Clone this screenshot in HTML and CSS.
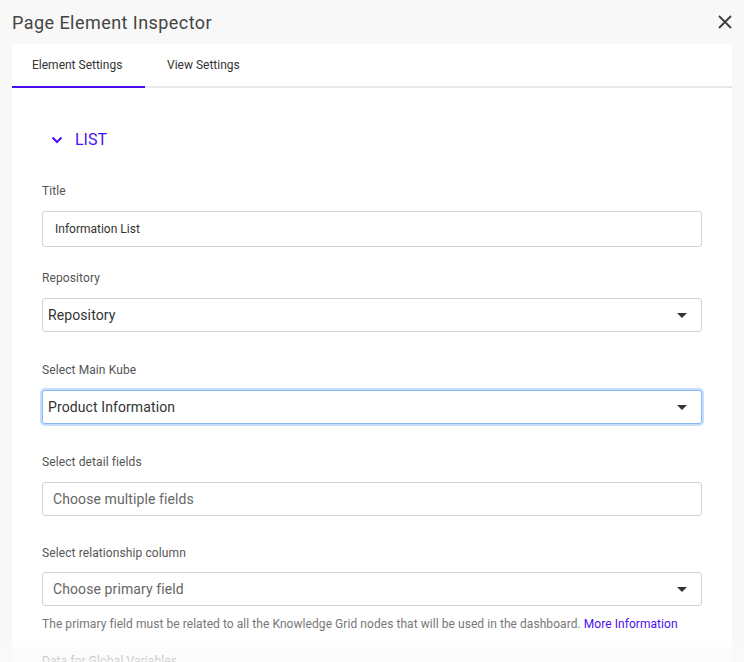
FILE: index.html
```html
<!DOCTYPE html>
<html lang="en">
<head>
<meta charset="utf-8">
<title>Page Element Inspector</title>
<link rel="stylesheet" href="styles.css">
</head>
<body>
<div class="inspector">
  <header class="head">
    <h1 class="head-title">Page Element Inspector</h1>
    <button class="close" aria-label="Close">
      <svg width="14" height="14" viewBox="0 0 14 14"><path d="M1 1L13 13M13 1L1 13" stroke="#3d3d3d" stroke-width="1.8" fill="none"/></svg>
    </button>
  </header>
  <div class="panel">
    <nav class="tabs">
      <div class="tab active">Element Settings</div>
      <div class="tab">View Settings</div>
    </nav>
    <div class="content">
      <div class="section-head">
        <svg class="chev" width="12" height="8" viewBox="0 0 12 8"><path d="M1.5 1.5L6 6L10.5 1.5" stroke="#4a0ff0" stroke-width="2" fill="none"/></svg>
        <span>LIST</span>
      </div>

      <div class="field f-title">
        <label class="label">Title</label>
        <div class="input text">Information List</div>
      </div>

      <div class="field">
        <label class="label">Repository</label>
        <div class="input select value"><span>Repository</span><i class="caret"></i></div>
      </div>

      <div class="field">
        <label class="label">Select Main Kube</label>
        <div class="input select value focus"><span>Product Information</span><i class="caret"></i></div>
      </div>

      <div class="field f-detail">
        <label class="label">Select detail fields</label>
        <div class="input placeholder"><span>Choose multiple fields</span></div>
      </div>

      <div class="field f-rel">
        <label class="label">Select relationship column</label>
        <div class="input select placeholder"><span>Choose primary field</span><i class="caret"></i></div>
        <p class="help">The primary field must be related to all the Knowledge Grid nodes that will be used in the dashboard. <a href="#">More Information</a></p>
      </div>

      <div class="field">
        <label class="label">Data for Global Variables</label>
      </div>
    </div>
  </div>
  <div class="fade"></div>
</div>
</body>
</html>
```
FILE: styles.css
```css
* { box-sizing: border-box; }
html, body { margin: 0; padding: 0; }
body {
  background: #f8f8f8;
  font-family: Roboto, "Liberation Sans", sans-serif;
  color: #333;
  width: 744px;
  height: 662px;
  overflow: hidden;
}
.inspector {
  position: relative;
  height: 662px;
  overflow: hidden;
  padding: 0 12px;
}
.head {
  height: 44px;
  display: flex;
  align-items: center;
  justify-content: space-between;
}
.head-title {
  margin: 0;
  font-size: 18px;
  font-weight: 400;
  color: #444;
  letter-spacing: 0.45px;
}
.close {
  border: 0;
  background: none;
  padding: 0;
  width: 14px;
  height: 14px;
  display: flex;
}
.panel {
  background: #fff;
  min-height: 640px;
}
.tabs {
  display: flex;
  height: 44px;
  border-bottom: 2px solid #e8e8e8;
}
.tab {
  height: 44px;
  display: flex;
  align-items: center;
  padding: 0 20px;
  font-size: 12px;
  color: #333;
  margin-bottom: -2px;
  border-bottom: 2px solid transparent;
}
.tab.active {
  width: 133px;
  border-bottom-color: #4a0ff0;
}
.tab + .tab { padding-left: 22px; }
.content {
  padding: 40px 30px 0;
}
.section-head {
  display: flex;
  align-items: center;
  gap: 12px;
  padding-left: 9px;
  height: 22px;
  color: #4a0ff0;
  font-size: 16px;
  margin-bottom: 33px;
}
.chev { margin-top: 1px; }
.field {
  display: flex;
  flex-direction: column;
  margin-bottom: 30px;
}
.field.f-title { margin-bottom: 23px; }
.field.f-detail { margin-bottom: 29px; }
.field.f-rel { margin-bottom: 21px; }
.f-rel .label { margin-bottom: 11px; }
.label {
  font-size: 12px;
  line-height: 16px;
  color: #555;
  margin-bottom: 12px;
  letter-spacing: 0.1px;
}
.input {
  height: 34px;
  border: 1px solid #cfd3dc;
  border-radius: 3px;
  display: flex;
  align-items: center;
  justify-content: space-between;
  background: #fff;
}
.input.text {
  height: 36px;
  padding-left: 12px;
  font-size: 12px;
  color: #333;
}
.input.value {
  padding: 0 14px 0 5px;
  font-size: 14px;
  color: #333;
  letter-spacing: 0.1px;
}
.input.placeholder {
  padding: 0 14px 0 10px;
  font-size: 14px;
  color: #666;
  letter-spacing: 0.1px;
}
.input.focus {
  border-color: #8ab9f8;
  box-shadow: 0 0 0 2px #c7ddfc;
}
.caret {
  width: 0;
  height: 0;
  border-left: 5px solid transparent;
  border-right: 5px solid transparent;
  border-top: 5px solid #333;
}
.help {
  margin: 10px 0 0;
  font-size: 12px;
  line-height: 16px;
  color: #777;
  letter-spacing: 0.06px;
}
.help a {
  color: #4a0ff0;
  text-decoration: none;
}
.fade {
  position: absolute;
  left: 0;
  right: 0;
  bottom: 0;
  height: 24px;
  background: linear-gradient(to bottom, rgba(250,250,250,0) 0%, rgba(250,250,250,0.6) 60%, rgba(250,250,250,0.8) 100%);
}
```
